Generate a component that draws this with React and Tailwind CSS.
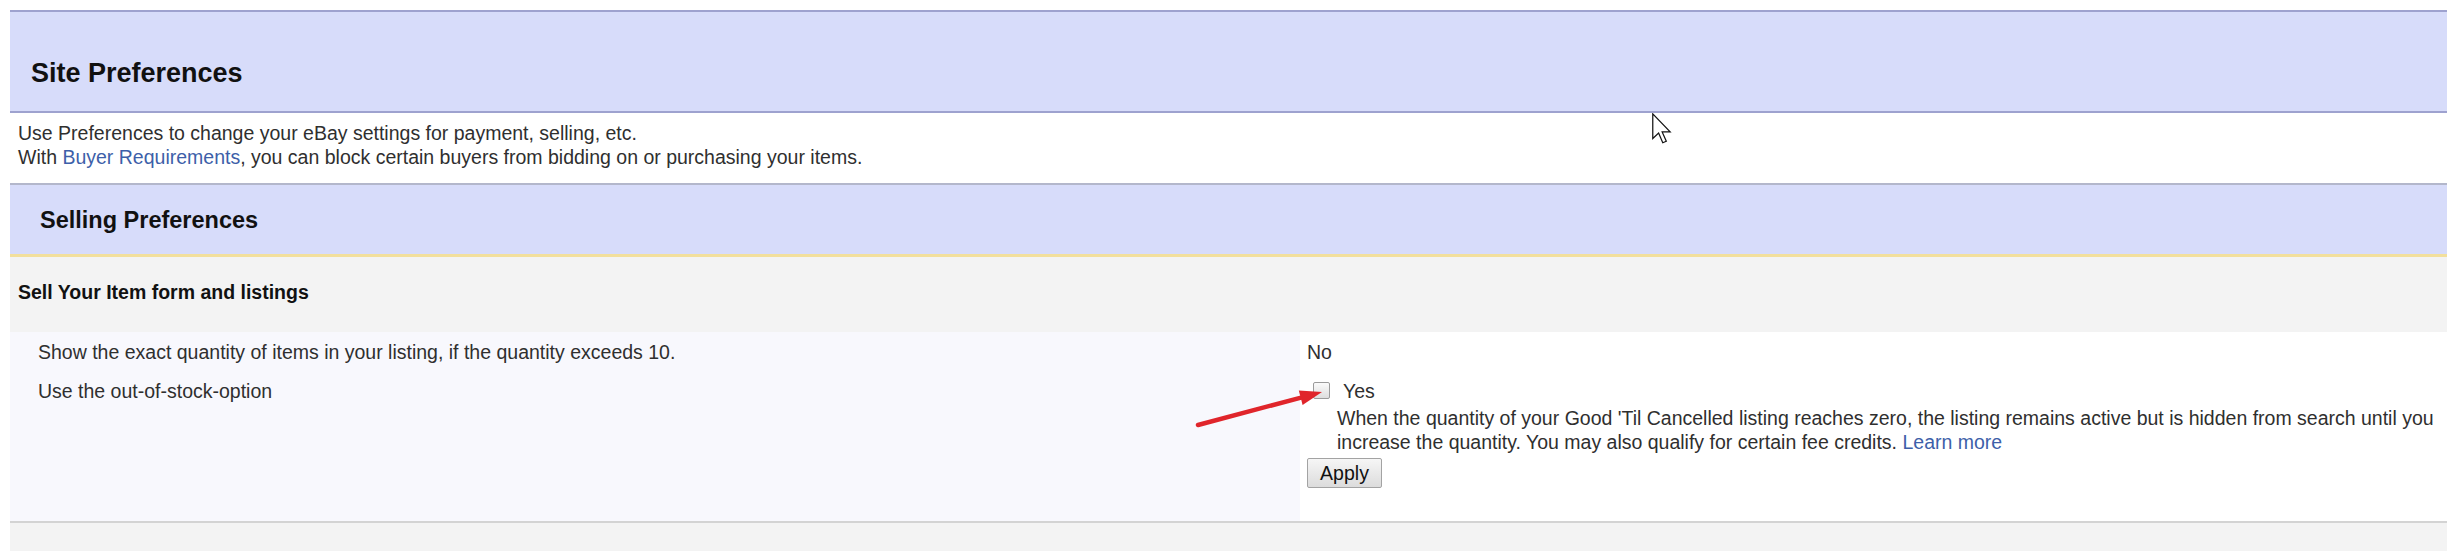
import React from 'react';

function FlechaRoja() {
  // flecha roja dibujada encima de la captura, apunta al checkbox
  return (
    <svg className="absolute left-[1190px] top-[380px]" width="140" height="55" viewBox="0 0 140 55">
      <line x1="8" y1="45" x2="112" y2="17.3" stroke="#e0252b" strokeWidth="4.5" strokeLinecap="round" />
      <polygon points="132,12 112.6,24.9 108.8,10.4" fill="#e0252b" />
    </svg>
  );
}

function Cursor() {
  return (
    <svg className="absolute left-[1652px] top-[113px]" width="20" height="31" viewBox="0 0 13 20">
      <path d="M0.5 0.5 L0.5 16.5 L4.3 13 L7 19.3 L9.3 18.3 L6.6 12.2 L11.8 12.2 Z" fill="#fff" stroke="#111" strokeWidth="0.8" strokeLinejoin="miter" />
    </svg>
  );
}

function App() {
  return (
    <div className="relative min-h-[551px] bg-white pt-[10px] pl-[10px] font-['Liberation_Sans',Arial,sans-serif] text-[19.5px] leading-[23px] text-[#2f2f2f]">
      {/* Cabecera */}
      <div className="border-t-2 border-b-2 border-[#9ea2cf] bg-[#d7dcfa] pl-[21px] pt-[45px] pb-[22px]">
        <h1 className="text-[27px] leading-[32px] font-bold text-[#111]">Site Preferences</h1>
      </div>

      {/* Texto de ayuda */}
      <div className="h-[70px] pl-[8px] pt-[8px] leading-[24px]">
        <p>Use Preferences to change your eBay settings for payment, selling, etc.</p>
        <p>
          With <a href="#" className="text-[#3d5fa9]">Buyer Requirements</a>, you can block certain buyers from bidding on or purchasing your items.
        </p>
      </div>

      {/* Selling Preferences */}
      <div className="h-[74px] border-t-2 border-b-[3px] border-t-[#b3b7cb] border-b-[#f2df9c] bg-[#d7dcfa] pl-[30px] pt-[21px]">
        <h2 className="text-[23.5px] leading-[28px] font-bold text-[#111]">Selling Preferences</h2>
      </div>

      <div className="h-[75px] bg-[#f3f3f3] pl-[8px] pt-[24px]">
        <h3 className="font-bold text-[#111]">Sell Your Item form and listings</h3>
      </div>

      {/* Filas */}
      <div className="border-b-2 border-[#d3d3d3]">
        <div className="flex">
          <div className="w-[1290px] shrink-0 bg-[#f8f8fd] pl-[28px] pt-[9px] pb-[6px]">
            Show the exact quantity of items in your listing, if the quantity exceeds 10.
          </div>
          <div className="flex-1 bg-white pl-[7px] pt-[9px] pb-[6px]">No</div>
        </div>
        <div className="flex">
          <div className="w-[1290px] shrink-0 bg-[#f8f8fd] pl-[28px] pt-[10px]">
            Use the out-of-stock-option
          </div>
          <div className="flex-1 bg-white pl-[7px] pt-[10px] pb-[33px]">
            <label className="flex items-start">
              <span className="ml-[6px] mt-[2px] h-[17px] w-[17px] rounded-[2px] border border-[#9b9b9b] bg-gradient-to-b from-[#fbfbfb] to-[#dedede]"></span>
              <span className="ml-[13px]">Yes</span>
            </label>
            <p className="mt-[3px] pl-[30px] leading-[24px]">
              When the quantity of your Good 'Til Cancelled listing reaches zero, the listing remains active but is hidden from search until you
              <br />
              increase the quantity. You may also qualify for certain fee credits. <a href="#" className="text-[#3d5fa9]">Learn more</a>
            </p>
            <button className="mt-[4px] h-[30px] w-[75px] rounded-[2px] border border-[#a3a3a3] bg-gradient-to-b from-[#f6f6f6] to-[#dcdcdc] text-[19.5px] leading-[26px] text-[#111]">
              Apply
            </button>
          </div>
        </div>
      </div>

      <div className="h-[28px] bg-[#f3f3f3]"></div>

      <FlechaRoja />
      <Cursor />
    </div>
  );
}

export default App;
